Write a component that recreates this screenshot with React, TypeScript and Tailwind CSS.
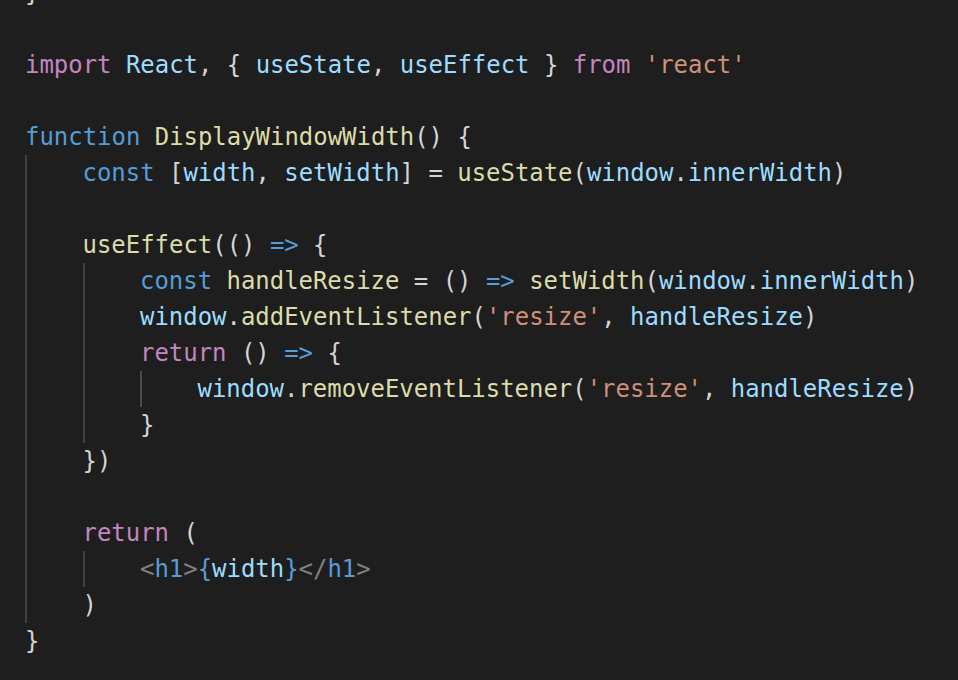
type Tok = [string, string];

const P = "text-[#d4d4d4]";
const K = "text-[#c586c0]";
const S = "text-[#569cd6]";
const V = "text-[#9cdcfe]";
const F = "text-[#dcdcaa]";
const STR = "text-[#ce9178]";
const G = "text-[#808080]";

type Line = { indent: number; toks: Tok[] };

const lines: Line[] = [
  { indent: 0, toks: [["}", P]] },
  { indent: 0, toks: [] },
  {
    indent: 0,
    toks: [
      ["import", K],
      [" ", P],
      ["React", V],
      [", { ", P],
      ["useState", V],
      [", ", P],
      ["useEffect", V],
      [" } ", P],
      ["from", K],
      [" ", P],
      ["'react'", STR],
    ],
  },
  { indent: 0, toks: [] },
  {
    indent: 0,
    toks: [
      ["function", S],
      [" ", P],
      ["DisplayWindowWidth", F],
      ["() {", P],
    ],
  },
  {
    indent: 1,
    toks: [
      ["const", S],
      [" [", P],
      ["width", V],
      [", ", P],
      ["setWidth", V],
      ["] = ", P],
      ["useState", F],
      ["(", P],
      ["window", V],
      [".", P],
      ["innerWidth", V],
      [")", P],
    ],
  },
  { indent: 1, toks: [] },
  {
    indent: 1,
    toks: [
      ["useEffect", F],
      ["(() ", P],
      ["=>", S],
      [" {", P],
    ],
  },
  {
    indent: 2,
    toks: [
      ["const", S],
      [" ", P],
      ["handleResize", F],
      [" = () ", P],
      ["=>", S],
      [" ", P],
      ["setWidth", F],
      ["(", P],
      ["window", V],
      [".", P],
      ["innerWidth", V],
      [")", P],
    ],
  },
  {
    indent: 2,
    toks: [
      ["window", V],
      [".", P],
      ["addEventListener", F],
      ["(", P],
      ["'resize'", STR],
      [", ", P],
      ["handleResize", V],
      [")", P],
    ],
  },
  {
    indent: 2,
    toks: [
      ["return", K],
      [" () ", P],
      ["=>", S],
      [" {", P],
    ],
  },
  {
    indent: 3,
    toks: [
      ["window", V],
      [".", P],
      ["removeEventListener", F],
      ["(", P],
      ["'resize'", STR],
      [", ", P],
      ["handleResize", V],
      [")", P],
    ],
  },
  { indent: 2, toks: [["}", P]] },
  { indent: 1, toks: [["})", P]] },
  { indent: 1, toks: [] },
  {
    indent: 1,
    toks: [
      ["return", K],
      [" (", P],
    ],
  },
  {
    indent: 2,
    toks: [
      ["<", G],
      ["h1", S],
      [">", G],
      ["{", S],
      ["width", V],
      ["}", S],
      ["</", G],
      ["h1", S],
      [">", G],
    ],
  },
  { indent: 1, toks: [[")", P]] },
  { indent: 0, toks: [["}", P]] },
  { indent: 0, toks: [] },
];

function CodeLine({ line }: { line: Line }) {
  const cols = [];
  for (let i = 0; i < line.indent; i++) {
    cols.push(
      <span
        key={i}
        className={
          i === 2
            ? "inline-block h-full w-[57.5px] shrink-0 shadow-[inset_2px_0_0_#4b4b4b]"
            : "inline-block h-full w-[57.5px] shrink-0 shadow-[inset_2px_0_0_#404040]"
        }
      />
    );
  }
  return (
    <div className="flex h-[36px] items-center whitespace-pre">
      {cols}
      <span className="leading-[36px]">
        {line.toks.map(([t, c], i) => (
          <span key={i} className={c}>
            {t}
          </span>
        ))}
      </span>
    </div>
  );
}

export default function App() {
  return (
    <div className="h-[680px] w-[958px] overflow-hidden bg-[#1e1e1e]">
      <div className="-mt-[25px] pl-[25px] font-['DejaVu_Sans_Mono',monospace] text-[23.95px] text-[#d4d4d4]">
        {lines.map((l, i) => (
          <CodeLine key={i} line={l} />
        ))}
      </div>
    </div>
  );
}
